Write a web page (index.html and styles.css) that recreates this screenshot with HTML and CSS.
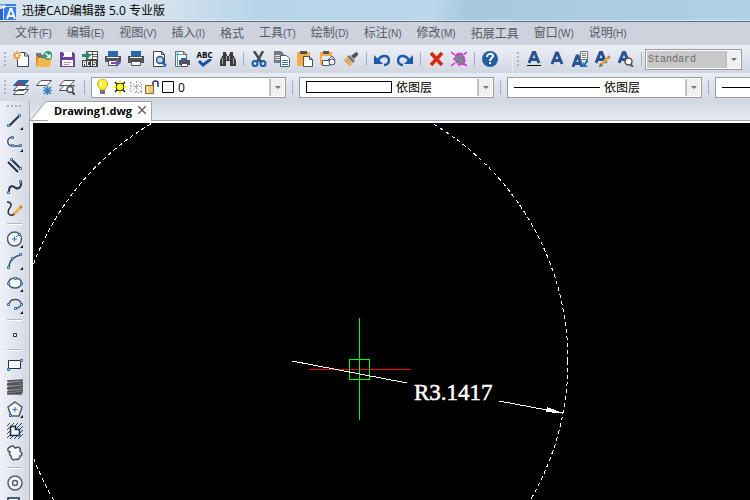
FILE: index.html
```html
<!DOCTYPE html>
<html lang="zh-CN">
<head>
    <meta charset="UTF-8">
    <meta name="viewport" content="width=device-width, initial-scale=1.0">
    <title>迅捷CAD编辑器 5.0 专业版</title>
    <link rel="stylesheet" href="styles.css">
</head>
<body>
    <header class="titlebar">
        <svg class="logo" width="16" height="18" viewBox="0 0 16 18">
            <path fill="#3a7bea" d="M2 2h14v16H2z"/>
            <path fill="#2a63d4" d="M0 7h3v11H0z"/>
            <path fill="none" stroke="#cfe0fb" d="M3.500 6v12M4 4.500h12"/>
            <path fill="none" stroke="#fff" stroke-width="2" d="M7 17l3.500-10h1L15 17M8 14h6"/>
            <circle cx="3.500" cy="4.500" r="2" fill="#fff"/>
            <path stroke="#3c7fe8" d="M0 2l3 2"/>
        </svg>
        <h1>迅捷CAD编辑器 5.0 专业版</h1>
    </header>

    <nav class="menubar">
        <a href="#">文件<small>(F)</small></a>
        <a href="#">编辑<small>(E)</small></a>
        <a href="#">视图<small>(V)</small></a>
        <a href="#">插入<small>(I)</small></a>
        <a href="#">格式</a>
        <a href="#">工具<small>(T)</small></a>
        <a href="#">绘制<small>(D)</small></a>
        <a href="#">标注<small>(N)</small></a>
        <a href="#">修改<small>(M)</small></a>
        <a href="#">拓展工具</a>
        <a href="#">窗口<small>(W)</small></a>
        <a href="#">说明<small>(H)</small></a>
    </nav>

    <div class="toolrow">
        <div class="toolbar toolbar-main">
            <span class="grip"></span>
            <button class="tool" aria-label="新建"><svg viewBox="0 0 16 16">
                <path fill="#fff" stroke="#444" d="M4.500 8v7.500h11V4.500l-4-3h-4M11.500 1.500v3.500h4"/>
                <path stroke="#e8962a" stroke-width="1.500" d="M4 0v9M0 4.500h8M1 1.500l6 6M7 1.500l-6 6"/>
                <circle cx="4" cy="4.500" r="1.500" fill="#fff"/></svg></button>
            <button class="tool" aria-label="打开"><svg viewBox="0 0 16 16">
                <path fill="#777" d="M0 2h5l1 2h3v3H0z"/><path fill="#d8882a" d="M0 5h2v11H0z"/>
                <path fill="#f8b64c" d="M3 7h13l-2 9H0z"/>
                <circle cx="12" cy="4.500" r="4.500" fill="#2c9c6c"/>
                <path fill="none" stroke="#fff" stroke-width="1.500" d="M9.500 2l4 4M14 3v3.500h-3.500"/></svg></button>
            <button class="tool" aria-label="保存"><svg viewBox="0 0 16 16">
                <path fill="#71429c" d="M1 1h13l2 2v13H1z"/><path fill="#fff" d="M4 1h9v5H4zM3 9h11v6H3z"/>
                <path stroke="#999" d="M5 11.500h7M5 13.500h5"/><path fill="#71429c" d="M4 2h1v3H4z"/></svg></button>
            <button class="tool" aria-label="输出 ACIS"><svg viewBox="0 0 16 16">
                <path fill="#fff" stroke="#444" d="M4.500 4.500v-4h11v8h-11z"/><path stroke="#666" d="M10.500 1v7M6 3.500h9M11 5.500h4"/>
                <path fill="#278c66" d="M0 3h5V1l4 3.500L5 8V6H0z"/><path fill="#444" d="M0 9h16v7H0z"/>
                <path fill="none" stroke="#fff" d="M1.500 15v-4.500h2V15M2 12.500h1M7.500 10.500h-2v4h2M9.500 10v5M14 10.500h-2.500v2h2v2H11"/></svg></button>
            <button class="tool" aria-label="批量打印"><svg viewBox="0 0 16 16">
                <path fill="#246bb2" d="M3 0h10v5H3z"/><path fill="#505459" d="M0 5h16v6H0z"/><path stroke="#fff" d="M2 6.500h12"/>
                <path fill="#fff" stroke="#505459" d="M3.500 9.500h9v5h-9z"/><path fill="#804da7" d="M6 11h5V8l5 4-5 4v-3H6z"/></svg></button>
            <button class="tool" aria-label="打印"><svg viewBox="0 0 16 16">
                <path fill="#246bb2" d="M3 0h10v5H3z"/><path fill="#505459" d="M0 5h16v7H0z"/><path stroke="#fff" d="M2 6.500h12"/>
                <path fill="#fff" stroke="#505459" d="M3.500 10.500h9v4h-9z"/></svg></button>
            <button class="tool" aria-label="打印预览"><svg viewBox="0 0 16 16">
                <path fill="#fff" stroke="#444" d="M2.500.5h8l3 3v12h-11zM10.500.5v3h3"/>
                <path stroke="#2a66ad" stroke-width="2.500" d="M11 11l4 4"/><circle cx="9" cy="9" r="3.500" fill="#b8d5ee" stroke="#27558b" stroke-width="1.500"/></svg></button>
            <button class="tool" aria-label="页面设置"><svg viewBox="0 0 16 16">
                <path fill="#fff" stroke="#666" d="M1.500.5h8l3 3v12h-11zM9.500.5v3h3"/><path stroke="#41a9c8" d="M3.500 0v16M1 3.500h8"/>
                <path fill="#246bb2" d="M7 7h6v3H7z"/><path fill="#505459" d="M5 9h11v5H5z"/><path fill="#fff" stroke="#505459" d="M7.500 12.500h6v3h-6z"/></svg></button>
            <button class="tool tool-abc" aria-label="拼写检查"><span>ABC</span><svg viewBox="0 0 16 9">
                <path fill="none" stroke="#1752a0" stroke-width="3" d="M2 2l4 4 8-6"/></svg></button>
            <button class="tool" aria-label="查找"><svg viewBox="0 0 16 16">
                <path fill="#3b3b3b" d="M3 1h3v2h1v2h2V3h1V1h3v3l2 3 1 3v5h-6v-5H6v5H0v-5l1-3 2-3z"/>
                <path stroke="#a5a5a5" d="M2.500 7v6M6.500 5v4M9.500 5v4M13.500 7v6"/></svg></button>
            <span class="sep"></span>
            <button class="tool" aria-label="剪切"><svg viewBox="0 0 16 16">
                <path stroke="#4b4b4b" stroke-width="2.500" d="M3 0l7 11M12 0L6 11"/>
                <g fill="none" stroke="#155da8" stroke-width="2"><circle cx="4" cy="12.500" r="2.500"/><circle cx="12" cy="12.500" r="2.500"/></g></svg></button>
            <button class="tool" aria-label="复制"><svg viewBox="0 0 16 16">
                <path fill="#727b86" d="M0 0h7l3 3v9H0z"/><path stroke="#dde3ea" d="M1 4.500h5M1 6.500h5M1 8.500h5"/>
                <path fill="#fff" stroke="#55606c" d="M6.500 4.500h6l3 3v8h-9z"/><path stroke="#3578b6" d="M8 9.500h6M8 11.500h6M8 13.500h6"/></svg></button>
            <button class="tool" aria-label="粘贴"><svg viewBox="0 0 16 16">
                <path fill="#f1ad48" d="M0 1h13v14H0z"/><path fill="#555" d="M3 0h7v3H3z"/>
                <path fill="#fff" stroke="#555" d="M6.500 5.500h6l3 3v7h-9zM12.500 5.500v3h3"/></svg></button>
            <button class="tool" aria-label="粘贴为块"><svg viewBox="0 0 16 16">
                <path fill="#f1ad48" d="M0 1h12v13H0z"/><path fill="#555" d="M3 0h6v3H3z"/><path fill="#e4eaf3" d="M2 5h9v7H2z"/>
                <path fill="#fff" stroke="#44526a" d="M2.500 9.500h7v5h-7zM8 9l4-4 3 4z"/><circle cx="12" cy="11" r="3" fill="#eef2f8" stroke="#44526a"/></svg></button>
            <button class="tool" aria-label="格式刷"><svg viewBox="0 0 16 16">
                <path fill="#555" d="M13 1l2 1v2l-4 4-3-3z"/><path fill="#767676" d="M6 4l6 6-2 2-6-6z"/>
                <path fill="#e8bd7c" d="M4 6l6 6-3 4-7-7z"/><path stroke="#b98c4c" d="M2 9l5 5M4 8l4 4"/></svg></button>
            <span class="sep"></span>
            <button class="tool" aria-label="撤销"><svg viewBox="0 0 16 16">
                <path fill="none" stroke="#1b5ca7" stroke-width="2.500" d="M4 10c2-6 10-7 11-1 0 3-2 5-5 5"/><path fill="#1b5ca7" d="M0 4v9h9z"/></svg></button>
            <button class="tool" aria-label="重做"><svg viewBox="0 0 16 16">
                <path fill="none" stroke="#1b5ca7" stroke-width="2.500" d="M12 10C10 4 2 3 1 9c0 3 2 5 5 5"/><path fill="#1b5ca7" d="M16 4v9H7z"/></svg></button>
            <span class="sep"></span>
            <button class="tool" aria-label="删除"><svg viewBox="0 0 16 16">
                <path stroke="#d32a0e" stroke-width="3.500" d="M3 2l11 12M14 2L3 14"/></svg></button>
            <button class="tool" aria-label="清理"><svg viewBox="0 0 16 16">
                <path stroke="#e020e0" stroke-width="1.500" d="M0 1l4 3M16 1l-4 3M0 15l4-3M16 15l-4-3"/>
                <path fill="#7d8790" stroke="#e020e0" stroke-width="1.500" stroke-dasharray="3 1" d="M6 3l4-1 4 6-1 5-5 1-5-6z"/></svg></button>
            <span class="sep"></span>
            <button class="tool" aria-label="帮助"><svg viewBox="0 0 16 16">
                <circle cx="8" cy="8" r="8" fill="#255f9e"/>
                <path fill="none" stroke="#fff" stroke-width="2" d="M5 6c0-4 6-4 6-1 0 2-3 2-3 5"/><path fill="#fff" d="M7 11h2v2H7z"/></svg></button>
        </div>
        <div class="toolbar toolbar-text">
            <span class="grip"></span>
            <button class="tool" aria-label="多行文字"><svg viewBox="0 0 16 16">
                <path fill="none" stroke="#2b5394" stroke-width="3" d="M3 12L7.500 1h1L13 12M5 8.500h6"/><path stroke="#111" d="M1 14.500h14"/></svg></button>
            <button class="tool" aria-label="单行文字"><svg viewBox="0 0 16 16">
                <path fill="none" stroke="#2b5394" stroke-width="3" d="M3 13L7.500 2h1L13 13M5 9.500h6"/></svg></button>
            <button class="tool" aria-label="插入文字"><svg viewBox="0 0 16 16">
                <path fill="none" stroke="#2b5394" stroke-width="3" d="M1 16L5 5h1L10 16M3 12.500h5"/>
                <path fill="#fff" stroke="#777" d="M8.500.5h7v8h-7z"/><path stroke="#777" d="M10 2.500h4M10 4.500h4M10 6.500h4"/>
                <path stroke="#1878c0" stroke-width="1.500" d="M15 8v3l-3 3"/><path fill="#1878c0" d="M11 11v5h5z"/></svg></button>
            <button class="tool" aria-label="编辑文字"><svg viewBox="0 0 16 16">
                <path fill="none" stroke="#2b5394" stroke-width="3" d="M1 12L5.500 1h1L11 12M3 8.500h6"/>
                <path stroke="#e9a43f" stroke-width="3" d="M6 14l8-8"/><path fill="#666" d="M4 16l1-4 3 3z"/><path stroke="#bd7950" stroke-width="2" d="M13 5l2 2"/></svg></button>
            <button class="tool" aria-label="查找文字"><svg viewBox="0 0 16 16">
                <path fill="none" stroke="#2b5394" stroke-width="3" d="M1 12L5.500 1h1L11 12M3 8.500h6"/>
                <path stroke="#555" stroke-width="2" d="M12 13l3 3"/><circle cx="10.500" cy="10.500" r="3.500" fill="#fff" stroke="#555" stroke-width="1.500"/></svg></button>
            <span class="sep"></span>
            <label class="combo combo-style">
                <select aria-label="文字样式"><option>Standard</option></select>
                <span class="arrow"></span>
            </label>
        </div>
    </div>

    <div class="toolrow toolrow-props">
        <div class="toolbar toolbar-props">
            <span class="grip"></span>
            <button class="tool" aria-label="图层特性"><svg viewBox="0 0 16 16">
                <path fill="#fff" stroke="#4b5158" d="M5 10.500h10.500L11 15.500H.5zM5 6.500h10.500L11 11.500H.5z"/>
                <path fill="#27669e" stroke="#27669e" d="M5 1.500h10.500L11 6.500H.5z"/><path fill="#e52020" d="M5 4h3v3H5z"/></svg></button>
            <button class="tool" aria-label="冻结图层"><svg viewBox="0 0 16 16">
                <path fill="#fff" stroke="#555" d="M5 1.500h10.500L11 6.500H.5z"/>
                <path stroke="#3b82bd" stroke-width="1.500" d="M11.500 7v9M7 11.500h9M8 8l7 7M15 8l-7 7"/></svg></button>
            <button class="tool" aria-label="图层查找"><svg viewBox="0 0 16 16">
                <path fill="#fff" stroke="#555" d="M5 6.500h10.500L11 11.500H.5zM5 1.500h10.500L11 6.500H.5z"/>
                <circle cx="11" cy="10.500" r="3" fill="#eef" stroke="#555" stroke-width="1.500"/><path stroke="#444" stroke-width="2" d="M13 13l3 3"/></svg></button>
            <span class="sep sep-wide"></span>
            <label class="combo">
                <span class="layer-icons">
                    <svg width="14" height="16" viewBox="0 0 14 16"><path fill="#ffee3c" stroke="#c8a818" d="M4.500 11C4 9 1.500 8 1.500 5a5 5 0 0 1 10 0c0 3-2 4-2.500 6z"/><path fill="#fff" d="M4 3h2v3H4z"/><path fill="#6e7480" d="M4 11h5v4H4z"/></svg>
                    <svg width="14" height="14" viewBox="0 0 14 14"><path stroke="#222" stroke-width="1.500" d="M7 0v14M0 7h14M2 2l10 10M12 2L2 12"/><circle cx="7" cy="7" r="4" fill="#ffff20" stroke="#222"/><path fill="#ff0" d="M6 0h2v3H6zM6 11h2v3H6zM0 6h3v2H0zM11 6h3v2h-3z"/></svg>
                    <svg width="12" height="12" viewBox="0 0 12 12"><path stroke="#aaa" stroke-dasharray="2 1" d="M6.500 0v12M0 5.500h12M1 1l10 10M11 1L1 11M.5 1v10M11.500 3v9M4 11.500h8"/></svg>
                    <svg width="14" height="14" viewBox="0 0 14 14"><path fill="none" stroke="#263572" stroke-width="1.500" d="M8 7V3q0-2 2.500-2T13 3v4"/><path fill="#edcb83" stroke="#8e6524" d="M.5 5.500h8v8h-8z"/><path stroke="#fff1bd" d="M2.500 7v6"/></svg>
                    <svg width="12" height="12" viewBox="0 0 12 12"><path fill="#fff" stroke="#000" d="M.5.5h11v11H.5z"/></svg>
                </span>
                <select aria-label="图层"><option>0</option></select>
                <span class="arrow"></span>
            </label>
            <span class="sep sep-wide"></span>
            <label class="combo">
                <span class="color-swatch"></span>
                <select aria-label="颜色"><option>依图层</option></select>
                <span class="arrow"></span>
            </label>
            <span class="sep sep-wide"></span>
            <label class="combo">
                <span class="line-swatch"></span>
                <select aria-label="线型"><option>依图层</option></select>
                <span class="arrow"></span>
            </label>
            <span class="sep sep-wide"></span>
            <label class="combo">
                <span class="line-swatch"></span>
                <select aria-label="线宽"><option>依图层</option></select>
                <span class="arrow"></span>
            </label>
        </div>
    </div>

    <main class="workspace">
        <aside class="sidebar">
            <span class="grip-h"></span>
            <button class="draw more" aria-label="直线"><svg viewBox="0 0 16 16">
                <path stroke="#25313f" stroke-width="2" d="M2 13L13 2"/><path class="node" d="M.5 11.500h2v2h-2zM11.500 1.500h2v2h-2z"/></svg></button>
            <button class="draw more" aria-label="多段线"><svg viewBox="0 0 16 16">
                <path fill="none" stroke="#4a5360" stroke-width="1.500" d="M6 2C-1 2-1 11 6 11h7"/><path class="node" d="M4.500 1.500h2v2h-2zM4.500 9.500h2v2h-2zM12.500 9.500h2v2h-2z"/></svg></button>
            <button class="draw" aria-label="双线"><svg viewBox="0 0 16 16">
                <path stroke="#25313f" stroke-width="2" d="M4 2l10 10M1 5l10 10"/><path class="node" d="M3.500 1.500h2v2h-2zM12.500 10.500h2v2h-2z"/></svg></button>
            <button class="draw" aria-label="样条曲线"><svg viewBox="0 0 16 16">
                <path fill="none" stroke="#25313f" stroke-width="2" d="M2 13C2 4 7 8 9 9s6 0 5-7"/><path class="node" d="M.5 12.500h2v2h-2zM12.500 1.500h2v2h-2z"/></svg></button>
            <button class="draw" aria-label="手绘"><svg viewBox="0 0 16 16">
                <path fill="none" stroke="#25313f" stroke-width="1.500" d="M0 1c5 0 5 4 2 7-2 4 0 7 4 6"/>
                <path stroke="#f0ae50" stroke-width="3" d="M7 13l7-7"/><path stroke="#c98736" stroke-width="3" d="M13 7l2-2"/><path fill="#444" d="M5 15l1-3 2 2z"/></svg></button>
            <span class="sep-h"></span>
            <button class="draw more" aria-label="圆"><svg viewBox="0 0 16 16">
                <circle cx="7.500" cy="8" r="7" fill="#f4f7fc" stroke="#555d68" stroke-width="1.500"/><path stroke="#3475b8" d="M7.500 5.500v5M5 8h5M9 6l3-3"/><path class="node" d="M11.500 2.500h2v2h-2z"/></svg></button>
            <button class="draw more" aria-label="圆弧"><svg viewBox="0 0 16 16">
                <path fill="none" stroke="#4a5360" stroke-width="1.500" d="M2 14C2 8 7 3 14 2"/><path class="node" d="M.5 13.500h2v2h-2zM4.500 4.500h2v2h-2zM12.500.5h2v2h-2z"/></svg></button>
            <button class="draw more" aria-label="椭圆"><svg viewBox="0 0 16 16">
                <ellipse cx="8" cy="8" rx="6.500" ry="5" fill="#f4f7fc" stroke="#4a5360" stroke-width="1.500"/><path class="node" d="M.5 7.500h2v2h-2zM7.500 2.500h2v2h-2zM13.500 7.500h2v2h-2z"/></svg></button>
            <button class="draw more" aria-label="椭圆弧"><svg viewBox="0 0 16 16">
                <path fill="none" stroke="#4a5360" stroke-width="1.500" d="M2 7c1-6 12-6 12 0 0 3-3 4-5 4"/><path class="node" d="M.5 6.500h2v2h-2zM13.500 6.500h2v2h-2zM7.500 10.500h2v2h-2z"/></svg></button>
            <span class="sep-h"></span>
            <button class="draw" aria-label="点"><svg viewBox="0 0 16 16"><path fill="#fff" stroke="#25313f" d="M6.500 6.500h3v3h-3z"/></svg></button>
            <span class="sep-h"></span>
            <button class="draw" aria-label="矩形"><svg viewBox="0 0 16 16">
                <path fill="#f4f7fc" stroke="#25313f" d="M1.500 3.500h12v8h-12z"/><path class="node" d="M.5 11.500h2v2h-2zM13.500 2.500h2v2h-2z"/></svg></button>
            <button class="draw" aria-label="螺旋"><svg viewBox="0 0 16 16">
                <path fill="#9a9c9e" d="M1 1h14v14H1z"/><path fill="none" stroke="#505356" stroke-width="1.500" d="M0 2l16-1M0 5l16-2v2L0 6M0 9l16-2v2L0 10M0 13l16-2v2L0 15h15"/></svg></button>
            <button class="draw more" aria-label="正多边形"><svg viewBox="0 0 16 16">
                <path fill="#f4f7fc" stroke="#555d68" stroke-width="1.500" d="M8 1l7 5-3 9H4L1 6z"/><path stroke="#3475b8" d="M8 6v5M5.500 8.500h5"/><path class="node" d="M2.500 13.500h2v2h-2z"/></svg></button>
            <button class="draw" aria-label="面域"><svg viewBox="0 0 16 16">
                <path stroke="#36404b" d="M0 3l3-3M0 7l7-7M0 11L11 0M0 15L15 0M3 16L16 3M7 16l9-9M11 16l5-5"/>
                <path fill="#f4f7fc" stroke="#17314f" stroke-width="1.500" d="M3.500 3.500h5v3h4v6h-9z"/></svg></button>
            <button class="draw" aria-label="修订云线"><svg viewBox="0 0 16 16">
                <path fill="#f4f7fc" stroke="#4a5360" stroke-width="1.500" d="M3 2c2-2 4-1 5 1 4-2 6 0 5 3 3 3 2 5 0 5 0 3-3 4-4 3-3 2-5 0-5-3-2-1-2-3-1-4C0 6 0 3 3 2z"/></svg></button>
            <span class="sep-h"></span>
            <button class="draw" aria-label="圆环"><svg viewBox="0 0 16 16">
                <circle cx="8" cy="8" r="7" fill="#f4f7fc" stroke="#555d68" stroke-width="1.500"/><circle cx="8" cy="8" r="2.500" fill="#fff" stroke="#555d68" stroke-width="1.500"/></svg></button>
            <button class="draw" aria-label="区域覆盖"><svg viewBox="0 0 16 16">
                <path fill="#f4f7fc" stroke="#17314f" stroke-width="1.500" d="M1 1h11v8h3v6H1z"/></svg></button>
        </aside>

        <section class="document">
            <div class="tabs">
                <svg class="slant" width="18" height="19" viewBox="0 0 18 19"><path fill="#fff" d="M0 19L16 1h2v18z"/><path fill="none" stroke="#9da2ab" d="M0 18.500h1L16 .5h2"/></svg>
                <div class="tab"><a href="#">Drawing1.dwg</a>
                    <button class="close" aria-label="关闭"><svg width="8" height="8" viewBox="0 0 8 8"><path stroke="#666" stroke-width="1.500" d="M0 0l8 8M8 0L0 8"/></svg></button>
                </div>
            </div>
            <div class="canvas">
                <svg class="drawing">
                    <circle class="dashed" cx="259" cy="238" r="276"/>
                    <path stroke="#f00" d="M276 246.500h102"/>
                    <path fill="none" stroke="#0f0" d="M326.500 195v102M316.500 236.500h20v20h-20z"/>
                    <path stroke="#fff" d="M259 238l115 22M466 278l64 12"/>
                    <path fill="#fff" d="M514 284l17 6.500-18-1.500z"/>
                    <text x="381" y="277">R3.1417</text>
                </svg>
            </div>
        </section>
    </main>
</body>
</html>
```
FILE: styles.css
```css
* { box-sizing: border-box; }

body {
    margin: 0;
    height: 100vh;
    overflow: hidden;
    display: flex;
    flex-direction: column;
    font-family: "Open Sans", "Noto Sans CJK SC", sans-serif;
    font-size: 12px;
    color: #000;
    background-color: #e3e8f1;
}

button {
    padding: 0;
    border: 0;
    background: none;
    font-family: inherit;
}

a { color: inherit; text-decoration: none; }
svg { display: block; flex: none; }

/* title and menu */
.titlebar {
    display: flex;
    align-items: center;
    gap: 6px;
    height: 22px;
    flex: none;
    border-bottom: 1px solid #5b6b7d;
    background: linear-gradient(100deg, #d5e3ee 0, #d3e2ed 22%, #b7d5e9 34%, #b9d7ea 58%, #a7c9e0 62%, #b0d0e5 100%);
    box-shadow: inset 0 -1px #e0ebf3;
}

.titlebar h1 {
    margin: 0;
    font-size: 12px;
    line-height: 20px;
    font-weight: normal;
}

.menubar {
    display: flex;
    align-items: center;
    gap: 15px;
    height: 23px;
    flex: none;
    padding-left: 15px;
    background-color: #ced2dc;
    color: #555b66;
    white-space: nowrap;
}

.menubar a { line-height: 20px; }
.menubar small { font-family: "Liberation Sans", sans-serif; font-size: 10px; }

/* toolbars */
.toolrow {
    display: flex;
    height: 28px;
    flex: none;
    background: linear-gradient(#edf0f7, #d0d5e0);
}

.toolrow-props { background: linear-gradient(#e9edf5, #d2d7e1); }

.toolbar {
    display: flex;
    align-items: center;
    padding-left: 4px;
}

.toolbar-main { padding-right: 11px; }
.toolbar-text { padding-left: 4px; border-left: 1px solid #e6eaf2; }

.toolbar-props {
    flex: 1;
    min-width: 0;
    overflow: hidden;
}

.grip {
    width: 2px;
    height: 15px;
    margin-right: 3px;
    flex: none;
    background: repeating-linear-gradient(#aeb3bd 0 2px, transparent 2px 4px);
}

.tool {
    width: 23px;
    height: 24px;
    display: flex;
    flex-direction: column;
    align-items: center;
    justify-content: center;
    flex: none;
}

.tool svg { width: 16px; height: 16px; }
.tool-abc span { font-size: 8px; line-height: 8px; font-weight: bold; }
.tool-abc svg { height: 9px; }

.sep {
    width: 1px;
    height: 14px;
    margin: 0 3px 0 4px;
    background-color: #a9aeb8;
    flex: none;
}

.sep-wide { margin: 0 6px; }

.combo {
    display: flex;
    align-items: center;
    width: 195px;
    height: 21px;
    flex: none;
    border: 1px solid #999b9e;
    background-color: #fff;
    padding: 1px;
}

.combo select {
    appearance: none;
    flex: 1;
    min-width: 0;
    height: 15px;
    padding: 0 4px;
    border: 0;
    background: none;
    font: 12px/15px "Open Sans", "Noto Sans CJK SC", sans-serif;
    color: #000;
}

.arrow {
    width: 15px;
    align-self: stretch;
    border-left: 2px solid #c0c0c0;
    background-color: #f0f0f0;
    display: flex;
    align-items: center;
    justify-content: center;
}

.arrow::after {
    content: "";
    border: 3px solid transparent;
    border-top-color: #777;
    border-bottom: 0;
}

.layer-icons {
    display: flex;
    align-items: center;
    gap: 3px;
    padding-left: 3px;
}

.color-swatch {
    width: 86px;
    height: 12px;
    margin-left: 5px;
    border: 1px solid #000;
}

.line-swatch {
    width: 86px;
    height: 1px;
    margin-left: 5px;
    background-color: #000;
}

.combo-style { width: 97px; }
.combo-style select {
    height: 17px;
    padding: 0 1px;
    background-color: #c8c8c8;
    color: #6d6d6d;
    font: 10px/17px "Liberation Mono", monospace;
}

/* drawing tools */
.workspace {
    display: flex;
    flex: 1;
    min-height: 0;
    background: linear-gradient(#d2d7e1, #e9edf5 20px);
}

.sidebar {
    width: 30px;
    display: flex;
    flex-direction: column;
    align-items: center;
    flex: none;
    overflow: hidden;
    padding-top: 4px;
    border-right: 1px solid #a8adb8;
    background: linear-gradient(90deg, #eef1f7, #d3d9e5);
}

.grip-h {
    width: 15px;
    height: 2px;
    flex: none;
    margin-bottom: 3px;
    background: repeating-linear-gradient(90deg, #aeb3bd 0 2px, transparent 2px 4px);
}

.draw {
    width: 22px;
    height: 22px;
    flex: none;
    position: relative;
    display: flex;
    align-items: center;
    justify-content: center;
}

.draw svg { width: 16px; height: 16px; }
.node { fill: #fff; stroke: #2a6db9; }

.more::after {
    content: "";
    position: absolute;
    right: 3px;
    bottom: 2px;
    border-left: 3px solid transparent;
    border-bottom: 3px solid #111;
}

.sep-h {
    width: 15px;
    height: 2px;
    margin: 3px 0;
    flex: none;
    background-color: #b3b7bf;
    border-bottom: 1px solid #fff;
}

/* document */
.document {
    flex: 1;
    min-width: 0;
    display: flex;
    flex-direction: column;
}

.tabs {
    display: flex;
    height: 20px;
    flex: none;
    border-bottom: 1px solid #9da2ab;
}

.tab {
    display: flex;
    align-items: center;
    gap: 6px;
    height: 20px;
    padding: 0 5px 2px 6px;
    border-top: 1px solid #9da2ab;
    border-right: 1px solid #9da2ab;
    border-radius: 0 2px 0 0;
    background-color: #fff;
    font-size: 11px;
    font-weight: bold;
}

.close { margin-bottom: 2px; }

.canvas {
    flex: 1;
    min-height: 0;
    background-color: #000;
    border-top: 2px solid #fff;
    border-left: 3px solid #fff;
}

.drawing {
    width: 100%;
    height: 100%;
    shape-rendering: crispEdges;
}

.dashed {
    fill: none;
    stroke: #fff;
    stroke-dasharray: 4 3;
}

.drawing text {
    fill: #fff;
    stroke: #fff;
    stroke-width: 0.5;
    font-family: "Liberation Serif", serif;
    font-size: 23px;
}
```
